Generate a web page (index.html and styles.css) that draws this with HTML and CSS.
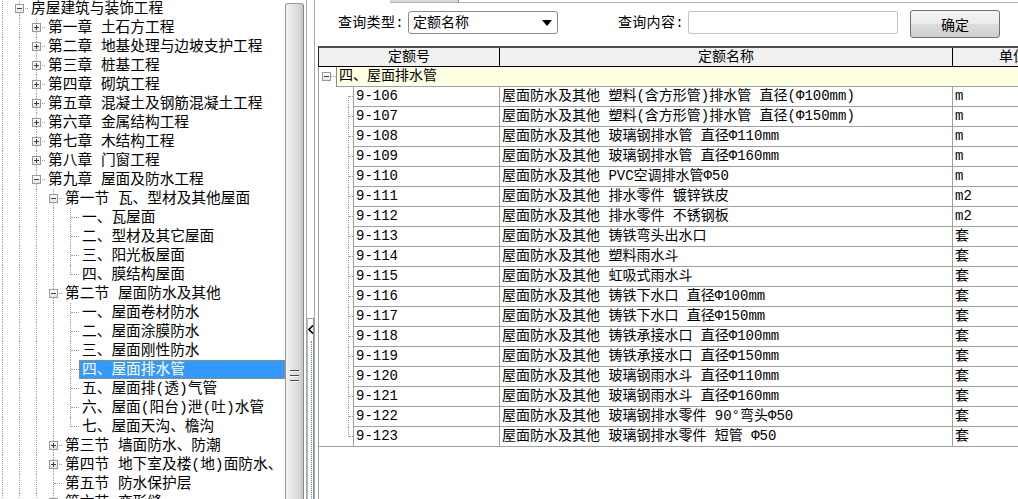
FILE: index.html
```html
<!DOCTYPE html>
<html lang="zh-CN">
<head>
<meta charset="utf-8">
<title>定额查询</title>
<link rel="stylesheet" href="styles.css">
</head>
<body>
<div class="app">
  <div class="tree">
    <div class="trow"><span class="g g0 v"></span><span class="g tee"><i class="box minus"></i></span><span class="lbl">房屋建筑与装饰工程</span></div>
    <div class="trow"><span class="g g0 v"></span><span class="g v"></span><span class="g tee"><i class="box plus"></i></span><span class="lbl">第一章 土石方工程</span></div>
    <div class="trow"><span class="g g0 v"></span><span class="g v"></span><span class="g tee"><i class="box plus"></i></span><span class="lbl">第二章 地基处理与边坡支护工程</span></div>
    <div class="trow"><span class="g g0 v"></span><span class="g v"></span><span class="g tee"><i class="box plus"></i></span><span class="lbl">第三章 桩基工程</span></div>
    <div class="trow"><span class="g g0 v"></span><span class="g v"></span><span class="g tee"><i class="box plus"></i></span><span class="lbl">第四章 砌筑工程</span></div>
    <div class="trow"><span class="g g0 v"></span><span class="g v"></span><span class="g tee"><i class="box plus"></i></span><span class="lbl">第五章 混凝土及钢筋混凝土工程</span></div>
    <div class="trow"><span class="g g0 v"></span><span class="g v"></span><span class="g tee"><i class="box plus"></i></span><span class="lbl">第六章 金属结构工程</span></div>
    <div class="trow"><span class="g g0 v"></span><span class="g v"></span><span class="g tee"><i class="box plus"></i></span><span class="lbl">第七章 木结构工程</span></div>
    <div class="trow"><span class="g g0 v"></span><span class="g v"></span><span class="g tee"><i class="box plus"></i></span><span class="lbl">第八章 门窗工程</span></div>
    <div class="trow"><span class="g g0 v"></span><span class="g v"></span><span class="g tee"><i class="box minus"></i></span><span class="lbl">第九章 屋面及防水工程</span></div>
    <div class="trow"><span class="g g0 v"></span><span class="g v"></span><span class="g v"></span><span class="g tee"><i class="box minus"></i></span><span class="lbl">第一节 瓦、型材及其他屋面</span></div>
    <div class="trow"><span class="g g0 v"></span><span class="g v"></span><span class="g v"></span><span class="g v"></span><span class="g tee"></span><span class="lbl">一、瓦屋面</span></div>
    <div class="trow"><span class="g g0 v"></span><span class="g v"></span><span class="g v"></span><span class="g v"></span><span class="g tee"></span><span class="lbl">二、型材及其它屋面</span></div>
    <div class="trow"><span class="g g0 v"></span><span class="g v"></span><span class="g v"></span><span class="g v"></span><span class="g tee"></span><span class="lbl">三、阳光板屋面</span></div>
    <div class="trow"><span class="g g0 v"></span><span class="g v"></span><span class="g v"></span><span class="g v"></span><span class="g corner"></span><span class="lbl">四、膜结构屋面</span></div>
    <div class="trow"><span class="g g0 v"></span><span class="g v"></span><span class="g v"></span><span class="g tee"><i class="box minus"></i></span><span class="lbl">第二节 屋面防水及其他</span></div>
    <div class="trow"><span class="g g0 v"></span><span class="g v"></span><span class="g v"></span><span class="g v"></span><span class="g tee"></span><span class="lbl">一、屋面卷材防水</span></div>
    <div class="trow"><span class="g g0 v"></span><span class="g v"></span><span class="g v"></span><span class="g v"></span><span class="g tee"></span><span class="lbl">二、屋面涂膜防水</span></div>
    <div class="trow"><span class="g g0 v"></span><span class="g v"></span><span class="g v"></span><span class="g v"></span><span class="g tee"></span><span class="lbl">三、屋面刚性防水</span></div>
    <div class="trow"><span class="g g0 v"></span><span class="g v"></span><span class="g v"></span><span class="g v"></span><span class="g tee"></span><span class="lbl sel">四、屋面排水管</span></div>
    <div class="trow"><span class="g g0 v"></span><span class="g v"></span><span class="g v"></span><span class="g v"></span><span class="g tee"></span><span class="lbl">五、屋面排(透)气管</span></div>
    <div class="trow"><span class="g g0 v"></span><span class="g v"></span><span class="g v"></span><span class="g v"></span><span class="g tee"></span><span class="lbl">六、屋面(阳台)泄(吐)水管</span></div>
    <div class="trow"><span class="g g0 v"></span><span class="g v"></span><span class="g v"></span><span class="g v"></span><span class="g corner"></span><span class="lbl">七、屋面天沟、檐沟</span></div>
    <div class="trow"><span class="g g0 v"></span><span class="g v"></span><span class="g v"></span><span class="g tee"><i class="box plus"></i></span><span class="lbl">第三节 墙面防水、防潮</span></div>
    <div class="trow"><span class="g g0 v"></span><span class="g v"></span><span class="g v"></span><span class="g tee"><i class="box plus"></i></span><span class="lbl">第四节 地下室及楼(地)面防水、</span></div>
    <div class="trow"><span class="g g0 v"></span><span class="g v"></span><span class="g v"></span><span class="g tee"></span><span class="lbl">第五节 防水保护层</span></div>
    <div class="trow"><span class="g g0 v"></span><span class="g v"></span><span class="g v"></span><span class="g tee"><i class="box plus"></i></span><span class="lbl">第六节 变形缝</span></div>
  </div>

  <div class="vscroll">
    <div class="thumb"><span class="grip"><i></i><i></i><i></i></span></div>
  </div>

  <div class="split">
    <div class="split-top"></div>
    <div class="split-grip">
      <svg class="arrow" width="6" height="9" viewBox="0 0 6 9"><path d="M5 0.5 L1 4.5 L5 8.5" fill="none" stroke="#000" stroke-width="1.6"/></svg>
      <span class="dots"></span>
    </div>
  </div>

  <div class="main">
    <div class="strip"><span class="tab"></span></div>
    <div class="qbar">
      <span class="qlabel">查询类型:</span>
      <div class="select"><span>定额名称</span><svg width="10" height="6" viewBox="0 0 10 6"><path d="M0 0 H10 L5 6 Z" fill="#000"/></svg></div>
      <span class="qlabel q2">查询内容:</span>
      <div class="input"></div>
      <div class="btn">确定</div>
    </div>

    <div class="grid">
      <div class="hdr">
        <div class="h h1">定额号</div>
        <div class="h h2">定额名称</div>
        <div class="h h3">单位</div>
      </div>
      <div class="group">
        <div class="gtc"><i class="box minus"></i></div>
        <div class="gcell">四、屋面排水管</div>
      </div>
      <div class="rows">
        <div class="r"><div class="tc first"></div><div class="c code">9-106</div><div class="c name">屋面防水及其他 塑料(含方形管)排水管 直径(Φ100mm)</div><div class="c unit">m</div></div>
        <div class="r"><div class="tc"></div><div class="c code">9-107</div><div class="c name">屋面防水及其他 塑料(含方形管)排水管 直径(Φ150mm)</div><div class="c unit">m</div></div>
        <div class="r"><div class="tc"></div><div class="c code">9-108</div><div class="c name">屋面防水及其他 玻璃钢排水管 直径Φ110mm</div><div class="c unit">m</div></div>
        <div class="r"><div class="tc"></div><div class="c code">9-109</div><div class="c name">屋面防水及其他 玻璃钢排水管 直径Φ160mm</div><div class="c unit">m</div></div>
        <div class="r"><div class="tc"></div><div class="c code">9-110</div><div class="c name">屋面防水及其他 PVC空调排水管Φ50</div><div class="c unit">m</div></div>
        <div class="r"><div class="tc"></div><div class="c code">9-111</div><div class="c name">屋面防水及其他 排水零件 镀锌铁皮</div><div class="c unit">m2</div></div>
        <div class="r"><div class="tc"></div><div class="c code">9-112</div><div class="c name">屋面防水及其他 排水零件 不锈钢板</div><div class="c unit">m2</div></div>
        <div class="r"><div class="tc"></div><div class="c code">9-113</div><div class="c name">屋面防水及其他 铸铁弯头出水口</div><div class="c unit">套</div></div>
        <div class="r"><div class="tc"></div><div class="c code">9-114</div><div class="c name">屋面防水及其他 塑料雨水斗</div><div class="c unit">套</div></div>
        <div class="r"><div class="tc"></div><div class="c code">9-115</div><div class="c name">屋面防水及其他 虹吸式雨水斗</div><div class="c unit">套</div></div>
        <div class="r"><div class="tc"></div><div class="c code">9-116</div><div class="c name">屋面防水及其他 铸铁下水口 直径Φ100mm</div><div class="c unit">套</div></div>
        <div class="r"><div class="tc"></div><div class="c code">9-117</div><div class="c name">屋面防水及其他 铸铁下水口 直径Φ150mm</div><div class="c unit">套</div></div>
        <div class="r"><div class="tc"></div><div class="c code">9-118</div><div class="c name">屋面防水及其他 铸铁承接水口 直径Φ100mm</div><div class="c unit">套</div></div>
        <div class="r"><div class="tc"></div><div class="c code">9-119</div><div class="c name">屋面防水及其他 铸铁承接水口 直径Φ150mm</div><div class="c unit">套</div></div>
        <div class="r"><div class="tc"></div><div class="c code">9-120</div><div class="c name">屋面防水及其他 玻璃钢雨水斗 直径Φ110mm</div><div class="c unit">套</div></div>
        <div class="r"><div class="tc"></div><div class="c code">9-121</div><div class="c name">屋面防水及其他 玻璃钢雨水斗 直径Φ160mm</div><div class="c unit">套</div></div>
        <div class="r"><div class="tc"></div><div class="c code">9-122</div><div class="c name">屋面防水及其他 玻璃钢排水零件 90°弯头Φ50</div><div class="c unit">套</div></div>
        <div class="r"><div class="tc last"></div><div class="c code">9-123</div><div class="c name">屋面防水及其他 玻璃钢排水零件 短管 Φ50</div><div class="c unit">套</div></div>
      </div>
    </div>
  </div>
</div>
</body>
</html>
```

FILE: styles.css
```css
html, body {
  margin: 0;
  padding: 0;
  background: #fff;
}
body {
  font-family: "Liberation Mono", "Noto Sans CJK SC", monospace;
  font-size: 14px;
  color: #000;
}
.app {
  display: flex;
  width: 1018px;
  height: 499px;
  overflow: hidden;
}

/* ---------- tree ---------- */
.tree {
  width: 285px;
  flex: none;
  overflow: hidden;
  margin-top: -1px;
  font-size: 14.7px;
}
.trow {
  display: flex;
  height: 19px;
  line-height: 19px;
  white-space: nowrap;
}
.g {
  flex: none;
  width: 17px;
  height: 19px;
  position: relative;
}
.g0 { width: 11px; }
.g.v::before,
.g.tee::before,
.g.corner::before {
  content: "";
  position: absolute;
  left: 8px;
  top: 0;
  bottom: 0;
  border-left: 1px dotted #a0a0a0;
}
.g0.v::before { left: 2px; }
.g.corner::before { bottom: auto; height: 10px; }
.g.tee::after,
.g.corner::after {
  content: "";
  position: absolute;
  left: 9px;
  right: 0;
  top: 9px;
  border-top: 1px dotted #a0a0a0;
}
.box {
  position: absolute;
  left: 4px;
  top: 5px;
  width: 9px;
  height: 9px;
  box-sizing: border-box;
  border: 1px solid #9a9a9a;
  background: linear-gradient(#ffffff, #e4e4e4);
  z-index: 1;
}
.box::before {
  content: "";
  position: absolute;
  left: 1px;
  top: 3px;
  width: 5px;
  height: 1px;
  background: #2c3e6e;
}
.box.plus::after {
  content: "";
  position: absolute;
  left: 3px;
  top: 1px;
  width: 1px;
  height: 5px;
  background: #2c3e6e;
}
.lbl {
  flex: 1;
  min-width: 0;
  height: 19px;
  box-sizing: border-box;
  overflow: hidden;
  padding: 1px 3px 0;
  line-height: 19px;
}
.lbl.sel {
  background: #3399ff;
  color: #fff;
  outline: 1px dotted #d7822a;
  outline-offset: -1px;
}

/* ---------- scrollbar ---------- */
.vscroll {
  width: 19px;
  flex: none;
  padding-top: 3px;
  box-sizing: border-box;
  margin-right: 2px;
}
.thumb {
  position: relative;
  height: 760px;
  box-sizing: border-box;
  border: 1px solid #9c9c9c;
  border-right-color: #888;
  border-radius: 3px;
  background: linear-gradient(90deg, #f4f4f4 0%, #e8e8e8 30%, #dadada 70%, #c6c6c6 100%);
}
.grip {
  position: absolute;
  left: 4px;
  top: 366px;
  width: 9px;
  display: flex;
  flex-direction: column;
  gap: 3px;
}
.grip i {
  display: block;
  height: 1px;
  background: #4a4a4a;
  border-bottom: 1px solid #f4f4f4;
}

/* ---------- splitter ---------- */
.split {
  width: 9px;
  flex: none;
  box-sizing: border-box;
  border-left: 1px solid #a8a8a8;
  border-right: 1px solid #a8a8a8;
  display: flex;
  flex-direction: column;
}
.split-top { height: 318px; flex: none; }
.split-grip {
  flex: 1;
  position: relative;
  border-top: 1px solid #a0a0a0;
  border-left: 1px solid #b8b8b8;
  border-right: 1px solid #909090;
  background: #fff;
}
.split-grip .arrow {
  position: absolute;
  left: 0;
  top: 6px;
}
.split-grip .dots {
  position: absolute;
  left: 3px;
  top: 22px;
  bottom: 0;
  border-left: 1px dotted #3a8ee6;
}

/* ---------- main pane ---------- */
.main {
  flex: 1;
  min-width: 0;
  display: flex;
  flex-direction: column;
  overflow: hidden;
}
.strip {
  height: 3px;
  flex: none;
  margin-left: 75px;
  border-bottom: 1px solid #b0b0b0;
  box-sizing: border-box;
}
.strip .tab {
  display: block;
  width: 68px;
  height: 2px;
  background: #d8d8d8;
  border-right: 1px solid #8a8a8a;
}
.qbar {
  display: flex;
  align-items: center;
  height: 28px;
  margin-top: 7px;
  padding-left: 23px;
  flex: none;
}
.qlabel {
  flex: none;
  width: 67px;
  line-height: 20px;
  margin-top: -3px;
  white-space: nowrap;
  letter-spacing: 0.3px;
}
.q2 { margin-left: 60px; width: 68px; }
.select {
  flex: none;
  width: 150px;
  height: 23px;
  margin-left: 3px;
  align-self: flex-start;
  margin-top: 1px;
  box-sizing: border-box;
  border: 1px solid #8a8a8a;
  border-radius: 3px;
  display: flex;
  align-items: center;
  justify-content: space-between;
  padding: 0 5px 0 4px;
  background: #fff;
}
.select span { line-height: 20px; }
.input {
  flex: none;
  width: 210px;
  height: 23px;
  margin-left: 2px;
  align-self: flex-start;
  margin-top: 1px;
  box-sizing: border-box;
  border: 1px solid #c4c4c4;
  border-radius: 2px;
  background: #fff;
}
.btn {
  flex: none;
  width: 90px;
  height: 28px;
  margin-left: 12px;
  box-sizing: border-box;
  border: 1px solid #707070;
  border-radius: 3px;
  background: linear-gradient(#f4f4f4 0%, #ebebeb 50%, #dddddd 51%, #cfcfcf 100%);
  display: flex;
  align-items: center;
  justify-content: center;
}

/* ---------- grid ---------- */
.grid {
  margin-top: 8px;
  margin-left: 3px;
  flex: 1;
  border-left: 1px solid #a0a0a0;
  min-width: 0;
}
.hdr {
  display: flex;
  margin-left: -1px;
  border-left: 1px solid #202020;
  border-top: 2px solid #505050;
  border-bottom: 1px solid #000;
  background: #f0f0f0;
  height: 21px;
  box-sizing: border-box;
}
.h {
  flex: none;
  box-sizing: border-box;
  text-align: center;
  line-height: 18px;
  border-right: 1px solid #000;
  white-space: nowrap;
}
.h1 { width: 181px; }
.h2 { width: 453px; }
.h3 { width: 120px; border-right: none; }

.group {
  display: flex;
  height: 20px;
}
.gtc {
  width: 17px;
  flex: none;
  position: relative;
}
.gtc .box { left: 3px; top: 5px; }
.gtc::after {
  content: "";
  position: absolute;
  left: 12px;
  right: 0;
  top: 9px;
  border-top: 1px dotted #a0a0a0;
}
.gcell {
  flex: 1;
  background: #ffffe1;
  border-left: 1px solid #8c8c8c;
  border-bottom: 1px solid #a0a0a0;
  padding-left: 2px;
  line-height: 19px;
  white-space: nowrap;
}

.rows {
  border-bottom: 1px solid #a0a0a0;
}
.r {
  display: flex;
  height: 20px;
}
.r:last-child { height: 19px; }
.tc {
  width: 34px;
  flex: none;
  position: relative;
}
.tc::before {
  content: "";
  position: absolute;
  left: 29px;
  top: 0;
  bottom: 0;
  border-left: 1px dotted #a0a0a0;
}
.tc.first::before { top: 9px; }
.tc.last::before { bottom: auto; height: 10px; }
.tc::after {
  content: "";
  position: absolute;
  left: 30px;
  right: 0;
  top: 9px;
  border-top: 1px dotted #a0a0a0;
}
.c {
  flex: none;
  box-sizing: border-box;
  border-left: 1px solid #a0a0a0;
  border-bottom: 1px solid #a0a0a0;
  padding-left: 2px;
  line-height: 19px;
  white-space: nowrap;
  overflow: hidden;
}
.r:last-child .c { border-bottom: none; }
.code { width: 146px; }
.name { width: 453px; }
.unit { width: 120px; }
```
